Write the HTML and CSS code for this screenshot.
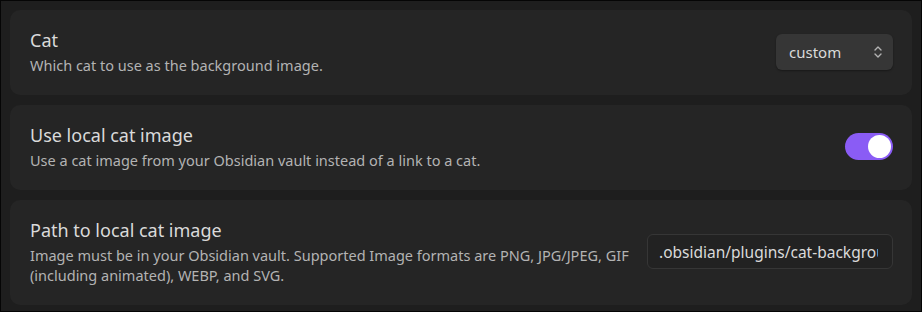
FILE: index.html
```html
<!DOCTYPE html>
<html lang="en">
<head>
<meta charset="utf-8">
<title>Cat settings</title>
<link rel="stylesheet" href="styles.css">
</head>
<body>
<div class="frame">
  <div class="setting">
    <div class="info">
      <div class="name">Cat</div>
      <div class="desc">Which cat to use as the background image.</div>
    </div>
    <div class="control">
      <div class="dropdown">
        <span>custom</span>
        <svg class="chev" width="12" height="14" viewBox="0 0 12 14" fill="none" stroke="currentColor" stroke-width="1.4" stroke-linecap="round" stroke-linejoin="round"><path d="M3 5 6 2 9 5"/><path d="M3 9 6 12 9 9"/></svg>
      </div>
    </div>
  </div>
  <div class="setting">
    <div class="info">
      <div class="name">Use local cat image</div>
      <div class="desc">Use a cat image from your Obsidian vault instead of a link to a cat.</div>
    </div>
    <div class="control">
      <div class="toggle"><div class="knob"></div></div>
    </div>
  </div>
  <div class="setting">
    <div class="info">
      <div class="name">Path to local cat image</div>
      <div class="desc">Image must be in your Obsidian vault. Supported Image formats are PNG, JPG/JPEG, GIF (including animated), WEBP, and SVG.</div>
    </div>
    <div class="control">
      <div class="textbox"><span class="value">.obsidian/plugins/cat-background/cat.png</span></div>
    </div>
  </div>
</div>
</body>
</html>
```
FILE: styles.css
```css
html, body {
  margin: 0;
  padding: 0;
  background: #1e1e1e;
}
body {
  font-family: "Noto Sans", "Open Sans", sans-serif;
}
.frame {
  box-sizing: border-box;
  width: 922px;
  height: 312px;
  border: 1px solid #050505;
  padding: 9px;
  display: flex;
  flex-direction: column;
  gap: 10px;
  overflow: hidden;
}
.setting {
  background: #252525;
  border-radius: 10px;
  padding: 18px 19px 20px 20px;
  display: flex;
  align-items: center;
  gap: 16px;
}
.info {
  flex: 1 1 auto;
  min-width: 0;
}
.name {
  font-size: 18px;
  line-height: 24px;
  color: #dadada;
}
.desc {
  margin-top: 3px;
  font-size: 14.5px;
  line-height: 20px;
  color: #b3b3b3;
}
.control {
  flex: 0 0 auto;
  display: flex;
  align-items: center;
}
.dropdown {
  box-sizing: border-box;
  width: 117px;
  height: 36px;
  border-radius: 6px;
  background: #363636;
  box-shadow: 0 1px 2px rgba(0,0,0,0.35);
  color: #dadada;
  font-size: 15px;
  display: flex;
  align-items: center;
  justify-content: space-between;
  padding: 0 9px 0 13px;
}
.chev {
  color: #b3b3b3;
}
.toggle {
  box-sizing: border-box;
  width: 48px;
  height: 27px;
  border-radius: 14px;
  background: #8a5cf5;
  padding: 2px;
  display: flex;
  justify-content: flex-end;
  align-items: center;
}
.knob {
  width: 23px;
  height: 23px;
  border-radius: 50%;
  background: #ffffff;
}
.textbox {
  box-sizing: border-box;
  width: 246px;
  height: 35px;
  border-radius: 6px;
  border: 1px solid #363636;
  background: #222222;
  color: #dadada;
  font-size: 15.5px;
  padding: 0 14px 0 11px;
  display: flex;
  align-items: center;
}
.value {
  display: block;
  overflow: hidden;
  white-space: nowrap;
  min-width: 0;
}
```
